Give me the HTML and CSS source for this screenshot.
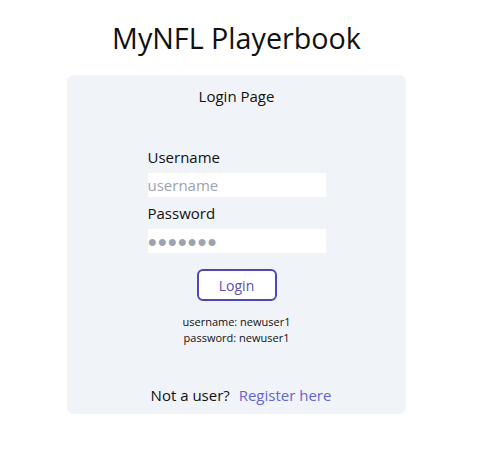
FILE: index.html
```html
<!DOCTYPE html>
<html>
<head>
<meta charset="utf-8">
<link rel="stylesheet" href="styles.css">
</head>
<body>
<div class="page">
  <h1 class="title">MyNFL Playerbook</h1>
  <div class="card">
    <div class="card-title">Login Page</div>
    <form class="form">
      <label class="label" for="u">Username</label>
      <input class="input" id="u" type="text" placeholder="username">
      <label class="label" for="p">Password</label>
      <input class="input pw" id="p" type="text" placeholder="●●●●●●●">
      <div class="btn-row"><button class="btn" type="button">Login</button></div>
      <div class="hint">username: newuser1<br>password: newuser1</div>
    </form>
    <div class="footer">Not a user? <a class="link" href="#">Register here</a></div>
  </div>
</div>
</body>
</html>
```
FILE: styles.css
```css
* { box-sizing: border-box; }
body {
  margin: 0;
  font-family: "Open Sans", "Noto Sans", sans-serif;
  color: #111;
  background: #fff;
}
.page {
  width: 339px;
  margin-left: 67px;
}
.title {
  margin: 0;
  padding-top: 18px;
  height: 75px;
  text-align: center;
  font-size: 28.7px;
  font-weight: 400;
  line-height: 40px;
}
.card {
  background: #f0f3f8;
  border-radius: 7px;
  height: 339px;
  padding: 9px 0 7px;
  display: flex;
  flex-direction: column;
  align-items: center;
}
.card-title {
  font-size: 15px;
  line-height: 24px;
}
.form {
  width: 178px;
  margin-top: 33px;
  display: flex;
  flex-direction: column;
}
.label {
  font-size: 15px;
  line-height: 32px;
}
.input {
  width: 178px;
  height: 24px;
  border: none;
  background: #fff;
  padding: 0;
  font-family: inherit;
  font-size: 15px;
  outline: none;
}
.input::placeholder { color: #9ca3af; }
.pw::placeholder { font-size: 16px; letter-spacing: 0.3px; color: #9ca3af; }
.btn-row {
  display: flex;
  justify-content: center;
  margin-top: 16px;
}
.btn {
  width: 80px;
  height: 32px;
  border: 2px solid #5046b6;
  border-radius: 6px;
  background: #fff;
  color: #5a50bb;
  font-family: inherit;
  font-size: 14px;
  padding: 0;
}
.hint {
  margin-top: 13px;
  text-align: center;
  font-size: 11px;
  line-height: 16px;
}
.footer {
  margin-top: auto;
  padding-left: 9px;
  font-size: 15px;
  line-height: 24px;
}
.link {
  margin-left: 5px;
  color: #6366d1;
  text-decoration: none;
}
```
